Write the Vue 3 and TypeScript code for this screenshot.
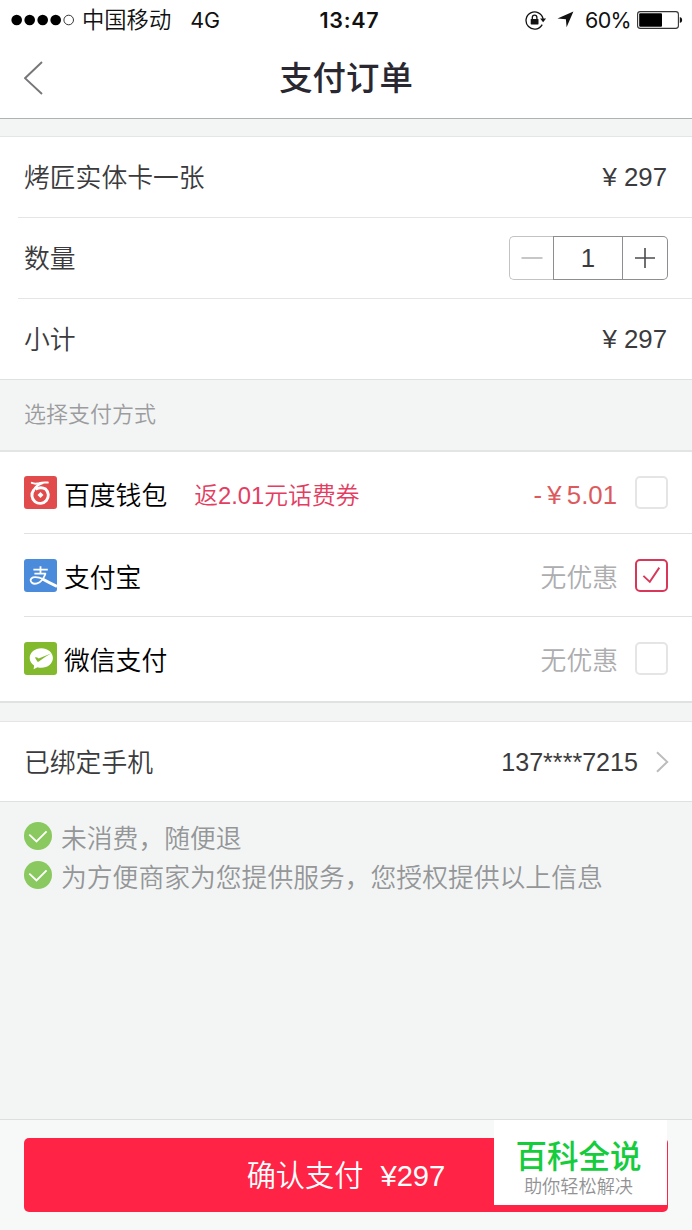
<script setup lang="ts">
import { computed, ref } from 'vue'

type Method = { id: string; name: string; promo?: string; offer: string; deal?: boolean }

const unitPrice = 297
const quantity = ref(1)
const selected = ref('alipay')
const total = computed(() => unitPrice * quantity.value)

const methods: Method[] = [
  { id: 'baidu', name: '百度钱包', promo: '返2.01元话费券', offer: '- ¥ 5.01', deal: true },
  { id: 'alipay', name: '支付宝', offer: '无优惠' },
  { id: 'wechat', name: '微信支付', offer: '无优惠' },
]

const notes = ['未消费，随便退', '为方便商家为您提供服务，您授权提供以上信息']
</script>

<template>
  <div class="screen">
    <header class="top">
      <div class="status">
        <div class="status-left">
          <svg class="signal" width="64" height="12" viewBox="0 0 64 12">
            <circle v-for="i in 4" :key="i" :cx="5.7 + (i - 1) * 13" cy="6" r="5.3" fill="#000" />
            <circle cx="57.7" cy="6" r="4.8" fill="none" stroke="#222" stroke-width="0.9" />
          </svg>
          <span class="carrier">中国移动</span>
          <span class="network">4G</span>
        </div>
        <span class="clock">13:47</span>
        <div class="status-right">
          <svg class="lock" width="22" height="20" viewBox="0 0 22 20">
            <path d="M17.2 14.6A8.6 8.6 0 1 1 18.1 9" fill="none" stroke="#111" stroke-width="1.3" />
            <path d="M15.1 8.6h6l-3 3.7z" fill="#111" />
            <rect x="5.7" y="9" width="7.8" height="5.4" rx="0.6" fill="#111" />
            <path d="M7.3 9V7.4a2.3 2.3 0 0 1 4.6 0V9" fill="none" stroke="#111" stroke-width="1.3" />
          </svg>
          <svg class="locate" width="17" height="17" viewBox="0 0 17 17">
            <path d="M16.4 .5L9.6 16.2 8.9 8.3.5 7.6z" fill="#111" />
          </svg>
          <span class="percent">60%</span>
          <svg class="battery" width="46" height="18" viewBox="0 0 46 18">
            <rect x="0.6" y="0.6" width="40.8" height="16.8" rx="2.6" fill="#fff" stroke="#333" stroke-width="1.1" />
            <rect x="2.2" y="2.2" width="22.8" height="13.6" rx="1" fill="#000" />
            <path d="M42.8 6q2.4 .3 2.4 3t-2.4 3z" fill="#111" />
          </svg>
        </div>
      </div>
      <nav class="nav">
        <svg class="back" width="20" height="34" viewBox="0 0 20 34">
          <path d="M18 1L1 17.2 18 33" fill="none" stroke="#77777a" stroke-width="1.9" />
        </svg>
        <h1>支付订单</h1>
      </nav>
    </header>

    <section class="card order">
      <div class="row">
        <span class="label">烤匠实体卡一张</span>
        <span class="price">¥ {{ unitPrice }}</span>
      </div>
      <div class="row">
        <span class="label">数量</span>
        <div class="stepper">
          <button class="step minus" @click="quantity = Math.max(1, quantity - 1)">
            <svg width="22" height="22" viewBox="0 0 22 22"><path d="M.5 11h21" stroke="#b4b4b6" stroke-width="1.5" /></svg>
          </button>
          <span class="count">{{ quantity }}</span>
          <button class="step plus" @click="quantity++">
            <svg width="22" height="22" viewBox="0 0 22 22"><path d="M1 11h20M11 1v20" stroke="#4c4c50" stroke-width="1.6" /></svg>
          </button>
        </div>
      </div>
      <div class="row">
        <span class="label">小计</span>
        <span class="price">¥ {{ total }}</span>
      </div>
    </section>

    <div class="caption">选择支付方式</div>

    <section class="methods">
      <div v-for="m in methods" :key="m.id" class="method" @click="selected = m.id">
        <svg v-if="m.id === 'baidu'" class="logo" width="33" height="33" viewBox="0 0 33 33">
          <rect width="33" height="33" rx="3" fill="#e14b4b" />
          <path d="M7.8 6.9Q11 8.2 15 7.2 19 6 23.8 6.6" fill="none" stroke="#fff" stroke-width="2" stroke-linecap="round" />
          <path d="M18.2 7.2Q12.8 8.6 9.6 14.4" fill="none" stroke="#fff" stroke-width="2.4" stroke-linecap="round" />
          <path d="M9.6 14.2A8.2 8.2 0 1 0 21.6 13.1Q17 10.4 11.6 13.2" fill="none" stroke="#fff" stroke-width="2.9" />
          <path d="M16.5 16.1l3 3-3 3-3-3z" fill="#fff" />
        </svg>
        <svg v-else-if="m.id === 'alipay'" class="logo" width="33" height="33" viewBox="0 0 33 33">
          <rect width="33" height="33" rx="3" fill="#4a8cdb" />
          <g fill="none" stroke="#fff">
            <path d="M9.4 10.7h14.4M16.5 7.2v7.3M10.4 14.7h11.5" stroke-width="1.8" />
            <path d="M21.6 14.2Q19.6 20.2 15.6 23.2 10.8 26.2 7.6 23.5 5 20.3 9.1 18.4 13.2 17.4 20 20.5" stroke-width="1.8" />
            <path d="M18.5 20Q25 23.7 33 27.3" stroke-width="3" />
          </g>
        </svg>
        <svg v-else class="logo" width="33" height="33" viewBox="0 0 33 33">
          <rect width="33" height="33" rx="3" fill="#83b92c" />
          <path d="M17.3 6.2c6.5 0 11.6 4.3 11.6 9.8s-5.1 9.8-11.6 9.8q-2 0-3.8-.5L9.6 27.2l.5-3.6C7.4 21.8 5.7 19.1 5.7 16c0-5.5 5.1-9.8 11.6-9.8z" fill="#fff" />
          <path d="M10.9 15.5q1.7-.8 3.7.9L27 11.4Q21 14.5 14.5 19.8q-.9.2-1.3-.6z" fill="#83b92c" />
        </svg>
        <span class="name">{{ m.name }}</span>
        <span v-if="m.promo" class="promo">{{ m.promo }}</span>
        <span class="offer" :class="{ deal: m.deal }">{{ m.offer }}</span>
        <span class="check" :class="{ on: selected === m.id }">
          <svg v-if="selected === m.id" width="29" height="29" viewBox="0 0 29 29">
            <path d="M6.4 14.9l6.4 6L22.3 6.6" fill="none" stroke="#d9375a" stroke-width="1.9" />
          </svg>
        </span>
      </div>
    </section>

    <section class="card phone">
      <div class="row">
        <span class="label">已绑定手机</span>
        <span class="number">137****7215</span>
        <svg class="chevron" width="13" height="22" viewBox="0 0 13 22">
          <path d="M1 1.2l10.2 9.7L1 20.8" fill="none" stroke="#bcbcbe" stroke-width="2" />
        </svg>
      </div>
    </section>

    <ul class="notes">
      <li v-for="n in notes" :key="n">
        <svg width="28" height="28" viewBox="0 0 28 28">
          <circle cx="14" cy="14" r="14" fill="#89c95f" />
          <path d="M5.3 12.6l7.2 6.9L22.6 9.3" fill="none" stroke="#fff" stroke-width="1.8" />
        </svg>
        <span>{{ n }}</span>
      </li>
    </ul>

    <footer class="footer">
      <button class="pay">确认支付<span class="amount">¥{{ total }}</span></button>
      <div class="stamp">
        <strong>百科全说</strong>
        <span>助你轻松解决</span>
      </div>
    </footer>
  </div>
</template>

<style>
body {
  margin: 0;
  background: #f3f5f5;
}
</style>

<style scoped>
.screen {
  display: flex;
  flex-direction: column;
  box-sizing: border-box;
  width: 692px;
  height: 1230px;
  overflow: hidden;
  background: #f3f5f5;
  color: #3b3b3d;
  font-family: "Liberation Sans", "Noto Sans CJK SC", sans-serif;
  font-size: 25.8px;
  font-weight: 350;
  line-height: 36px;
  white-space: nowrap;
}
.screen * {
  box-sizing: border-box;
}
svg {
  display: block;
  flex: none;
}
button {
  padding: 0;
  border: 0;
  background: none;
  font: inherit;
}
.top {
  height: 119px;
  background: #fff;
  border-bottom: 1px solid #aeb2b0;
}
.status {
  display: grid;
  grid-template-columns: 1fr auto 1fr;
  align-items: center;
  height: 38px;
  padding: 0 9px 1px 11px;
  color: #111;
}
.status-left,
.status-right {
  display: flex;
  align-items: center;
}
.status-right {
  justify-content: flex-end;
}
.carrier {
  margin-left: 7px;
  padding-bottom: 3px;
  font-family: "Noto Sans CJK SC", sans-serif;
  font-size: 22.3px;
}
.network {
  margin-left: 19px;
  font-family: Inter, sans-serif;
  font-size: 21.5px;
  font-weight: 400;
}
.clock {
  margin-left: 5px;
  font-family: Inter, sans-serif;
  font-size: 21.5px;
  font-weight: 600;
  letter-spacing: 0.7px;
}
.locate {
  margin-left: 10px;
}
.percent {
  margin-left: 11px;
  font-family: Inter, sans-serif;
  font-size: 21.5px;
  font-weight: 400;
  letter-spacing: -0.7px;
}
.battery {
  margin-left: 6px;
}
.nav {
  display: grid;
  grid-template-columns: 24px 1fr 24px;
  align-items: center;
  height: 80px;
  padding: 0 24px 1px;
}
h1 {
  margin: 0;
  padding-bottom: 3px;
  color: #29272f;
  font-family: "Noto Sans CJK SC", sans-serif;
  font-size: 33.4px;
  font-weight: 500;
  text-align: center;
}
.card {
  padding-left: 18px;
  background: #fff;
  border-top: 1px solid #e4e6e5;
  border-bottom: 1px solid #dfe1e0;
}
.order {
  height: 244px;
  margin-top: 17px;
}
.row {
  display: flex;
  align-items: center;
  height: 81px;
  padding: 0 25px 0 6px;
}
.order .row:first-child {
  height: 80px;
}
.order .row + .row {
  border-top: 1px solid #e5e5e5;
}
.label {
  padding-top: 2px;
}
.price,
.number {
  margin-left: auto;
}
.number {
  font-size: 25.1px;
}
.stepper {
  display: flex;
  height: 44px;
  margin-left: auto;
  margin-right: -1px;
}
.step {
  display: flex;
  align-items: center;
  justify-content: center;
  width: 45px;
  border: 1px solid #8e8e90;
}
.minus {
  width: 44px;
  border-color: #c3c3c4;
  border-right: 0;
  border-radius: 5px 0 0 5px;
}
.plus {
  border-left: 0;
  border-radius: 0 5px 5px 0;
}
.count {
  width: 70px;
  border: 1px solid #8e8e90;
  line-height: 43px;
  text-align: center;
}
.caption {
  height: 70px;
  padding-left: 24px;
  color: #9c9c9e;
  font-size: 22px;
  line-height: 70px;
}
.methods {
  height: 253px;
  padding-left: 24px;
  background: #fff;
  border-top: 2px solid #e3e4e4;
  border-bottom: 2px solid #e0e2e1;
}
.method {
  display: flex;
  align-items: center;
  height: 83px;
  padding-right: 24px;
}
.method:first-child {
  height: 81px;
}
.method + .method {
  border-top: 1px solid #e1e1e1;
}
.name,
.promo,
.offer {
  padding-top: 6px;
}
.name {
  margin-left: 7px;
  color: #000;
}
.promo {
  margin-left: 27px;
  color: #e33e62;
  font-size: 23.8px;
}
.offer {
  margin-left: auto;
  color: #adadaf;
}
.deal {
  padding-top: 4px;
  padding-right: 1px;
  color: #dc5a5d;
  word-spacing: -2px;
}
.check {
  width: 33px;
  height: 33px;
  margin-left: 17px;
  border: 2px solid #e5e5e6;
  border-radius: 5px;
}
.check.on {
  border-color: #d9375a;
}
.phone {
  height: 81px;
  margin-top: 18px;
}
.phone .row {
  height: 79px;
  padding-right: 23px;
}
.chevron {
  margin-left: 18px;
}
.notes {
  margin: 14px 0 0;
  padding: 0 24px;
  color: #949698;
  list-style: none;
}
.notes li {
  display: flex;
  align-items: center;
  gap: 9px;
  height: 39px;
}
.notes span {
  padding-top: 6px;
}
.footer {
  position: relative;
  height: 111px;
  margin-top: auto;
  padding: 18px 24px 0;
  background: #f7f9f9;
  border-top: 1px solid #dcdfde;
}
.pay {
  display: block;
  width: 100%;
  height: 74px;
  padding-top: 2px;
  border-radius: 5px;
  background: #ff2445;
  color: #fff;
  font-size: 29.2px;
}
.amount {
  margin-left: 17px;
}
.stamp {
  position: absolute;
  top: 0;
  right: 25px;
  display: flex;
  flex-direction: column;
  align-items: center;
  width: 173px;
  height: 85px;
  padding: 18px 4px 0 0;
  background: #fff;
  font-family: "Noto Sans CJK SC", sans-serif;
}
.stamp strong {
  color: #14cc3c;
  font-size: 31.5px;
  font-weight: 500;
  line-height: 32px;
}
.stamp span {
  margin-top: 2px;
  color: #929294;
  font-size: 18.2px;
  line-height: 26px;
}
</style>
